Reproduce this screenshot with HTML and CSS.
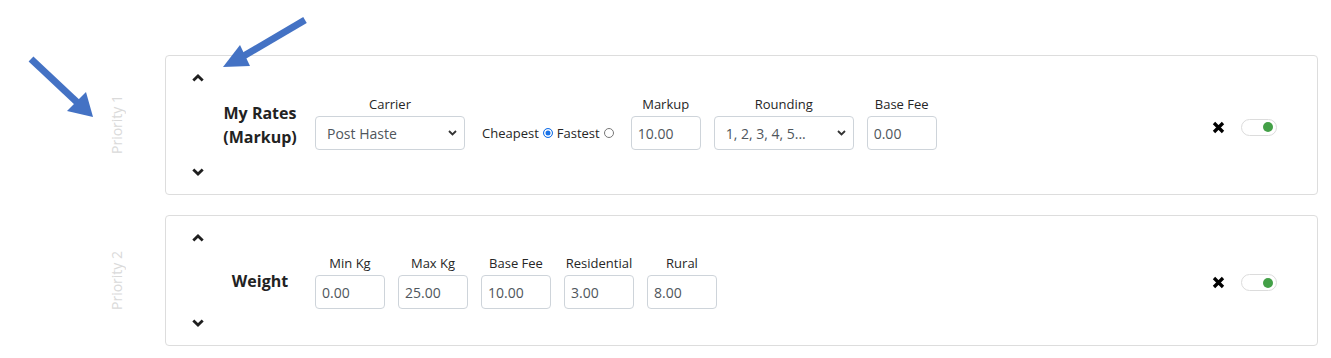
FILE: index.html
```html
<!DOCTYPE html>
<html lang="en">
<head>
<meta charset="utf-8">
<title>Shipping rules</title>
<link rel="stylesheet" href="styles.css">
</head>
<body>
<div class="page">
  <svg class="annotations" width="1331" height="358" viewBox="0 0 1331 358" aria-hidden="true">
    <line x1="31" y1="59" x2="80" y2="105" class="arrow-shaft"/>
    <polygon points="93,117 67,111 86,92" class="arrow-head"/>
    <line x1="305" y1="20" x2="242" y2="57" class="arrow-shaft"/>
    <polygon points="223,67 240,45 250,66" class="arrow-head"/>
  </svg>

  <div class="rule-row">
    <div class="priority"><span>Priority 1</span></div>
    <div class="rule-card rule-card--tall">
      <div class="order">
        <button class="order-btn" type="button"><svg width="12" height="8" viewBox="0 0 12 8"><polyline points="1.3,6.6 6,2 10.7,6.6"/></svg></button>
        <button class="order-btn" type="button"><svg width="12" height="8" viewBox="0 0 12 8"><polyline points="1.3,1.4 6,6 10.7,1.4"/></svg></button>
      </div>
      <div class="rule-title">My Rates (Markup)</div>
      <div class="fields fields--markup">
        <div class="field">
          <label class="field-label">Carrier</label>
          <div class="select-wrap select-wrap--carrier">
            <select class="control"><option>Post Haste</option></select>
            <svg class="caret" width="9" height="6" viewBox="0 0 9 6"><polyline points="1,1 4.5,4.5 8,1"/></svg>
          </div>
        </div>
        <div class="field field--choice">
          <span class="field-label"></span>
          <div class="choice">
            <span>Cheapest</span><span class="radio radio--on"></span>
            <span>Fastest</span><span class="radio"></span>
          </div>
        </div>
        <div class="field">
          <label class="field-label">Markup</label>
          <input class="control control--num" value="10.00">
        </div>
        <div class="field">
          <label class="field-label">Rounding</label>
          <div class="select-wrap select-wrap--rounding">
            <select class="control"><option>1, 2, 3, 4, 5...</option></select>
            <svg class="caret" width="9" height="6" viewBox="0 0 9 6"><polyline points="1,1 4.5,4.5 8,1"/></svg>
          </div>
        </div>
        <div class="field">
          <label class="field-label">Base Fee</label>
          <input class="control control--num" value="0.00">
        </div>
      </div>
      <div class="actions">
        <svg class="remove" width="13" height="13" viewBox="0 0 13 13"><path d="M2 2 L11 11 M11 2 L2 11"/></svg>
        <span class="toggle"><span class="toggle-dot"></span></span>
      </div>
    </div>
  </div>

  <div class="rule-row">
    <div class="priority"><span>Priority 2</span></div>
    <div class="rule-card rule-card--short">
      <div class="order">
        <button class="order-btn" type="button"><svg width="12" height="8" viewBox="0 0 12 8"><polyline points="1.3,6.6 6,2 10.7,6.6"/></svg></button>
        <button class="order-btn" type="button"><svg width="12" height="8" viewBox="0 0 12 8"><polyline points="1.3,1.4 6,6 10.7,1.4"/></svg></button>
      </div>
      <div class="rule-title">Weight</div>
      <div class="fields">
        <div class="field">
          <label class="field-label">Min Kg</label>
          <input class="control control--num" value="0.00">
        </div>
        <div class="field">
          <label class="field-label">Max Kg</label>
          <input class="control control--num" value="25.00">
        </div>
        <div class="field">
          <label class="field-label">Base Fee</label>
          <input class="control control--num" value="10.00">
        </div>
        <div class="field">
          <label class="field-label">Residential</label>
          <input class="control control--num" value="3.00">
        </div>
        <div class="field">
          <label class="field-label">Rural</label>
          <input class="control control--num" value="8.00">
        </div>
      </div>
      <div class="actions">
        <svg class="remove" width="13" height="13" viewBox="0 0 13 13"><path d="M2 2 L11 11 M11 2 L2 11"/></svg>
        <span class="toggle"><span class="toggle-dot"></span></span>
      </div>
    </div>
  </div>
</div>
</body>
</html>
```
FILE: styles.css
```css
* { box-sizing: border-box; }

html, body {
  margin: 0;
  background: #fff;
  font-family: "Open Sans", "Liberation Sans", sans-serif;
  color: #212529;
}

.page {
  position: relative;
  width: 1331px;
  height: 358px;
  padding-top: 55px;
  display: flex;
  flex-direction: column;
  gap: 20px;
  overflow: hidden;
}

.annotations {
  position: absolute;
  left: 0;
  top: 0;
  pointer-events: none;
  z-index: 5;
}
.arrow-shaft { stroke: #4472c4; stroke-width: 7; }
.arrow-head { fill: #4472c4; }

.rule-row {
  display: flex;
  padding-left: 100px;
  padding-right: 13px;
}

.priority {
  width: 32px;
  margin-right: 33px;
  display: flex;
  align-items: center;
  justify-content: center;
}
.priority span {
  writing-mode: vertical-rl;
  transform: rotate(180deg);
  font-size: 14px;
  color: #dadada;
  white-space: nowrap;
}

.rule-card {
  flex: 1;
  display: flex;
  align-items: flex-start;
  border: 1px solid #dddddd;
  border-radius: 4px;
  padding: 15px 40px 15px 25px;
}
.rule-card--tall { height: 140px; }
.rule-card--short { height: 131px; }

.order {
  align-self: stretch;
  width: 14px;
  display: flex;
  flex-direction: column;
  justify-content: space-between;
}
.order-btn {
  width: 14px;
  height: 14px;
  padding: 0;
  border: 0;
  background: none;
  display: flex;
  align-items: center;
  justify-content: center;
}
.order-btn polyline {
  fill: none;
  stroke: #1f1f1f;
  stroke-width: 2.8;
}

.rule-title {
  align-self: center;
  width: 110px;
  text-align: center;
  font-size: 16px;
  font-weight: 700;
  line-height: 24px;
  color: #222;
  padding: 0 6px;
}

.fields {
  display: flex;
  align-items: flex-end;
  gap: 13px;
  margin-top: 22px;
}
.fields--markup { margin-top: 23px; }

.field {
  display: flex;
  flex-direction: column;
  align-items: center;
}
.field-label {
  display: block;
  height: 20px;
  line-height: 20px;
  margin-bottom: 2px;
  font-size: 13px;
  color: #262626;
  white-space: nowrap;
}
.field--choice { padding: 0 4px; }

.control {
  height: 34px;
  border: 1px solid #ced4da;
  border-radius: 4px;
  background: #fff;
  font-family: "Open Sans", "Liberation Sans", sans-serif;
  font-size: 14px;
  color: #4f565c;
  outline: none;
}
.control--num {
  width: 70px;
  padding: 0 6px;
}

.select-wrap {
  position: relative;
}
.select-wrap select {
  appearance: none;
  -webkit-appearance: none;
  width: 100%;
  padding: 0 24px 0 11px;
}
.select-wrap--carrier { width: 150px; }
.select-wrap--rounding { width: 140px; }
.caret {
  position: absolute;
  right: 8px;
  top: 14px;
  pointer-events: none;
}
.caret polyline {
  fill: none;
  stroke: #333;
  stroke-width: 1.8;
}

.choice {
  height: 34px;
  display: flex;
  align-items: center;
  gap: 4px;
  font-size: 13px;
  color: #262626;
}
.radio {
  width: 10px;
  height: 10px;
  border-radius: 50%;
  border: 1px solid #777;
  background: #fff;
  display: inline-block;
}
.radio--on {
  border-color: #1a73e8;
  background: #1a73e8;
  box-shadow: inset 0 0 0 1.5px #fff;
}

.actions {
  align-self: center;
  margin-left: auto;
  margin-top: 4px;
  display: flex;
  align-items: center;
  gap: 16px;
}
.remove path {
  stroke: #000;
  stroke-width: 3.3;
  fill: none;
}
.toggle {
  width: 36px;
  height: 17px;
  border: 1.5px solid #dcdcdc;
  border-radius: 9px;
  background: #fff;
  display: flex;
  align-items: center;
  justify-content: flex-end;
  padding-right: 3px;
}
.toggle-dot {
  width: 10px;
  height: 10px;
  border-radius: 50%;
  background: #43a047;
}
```
